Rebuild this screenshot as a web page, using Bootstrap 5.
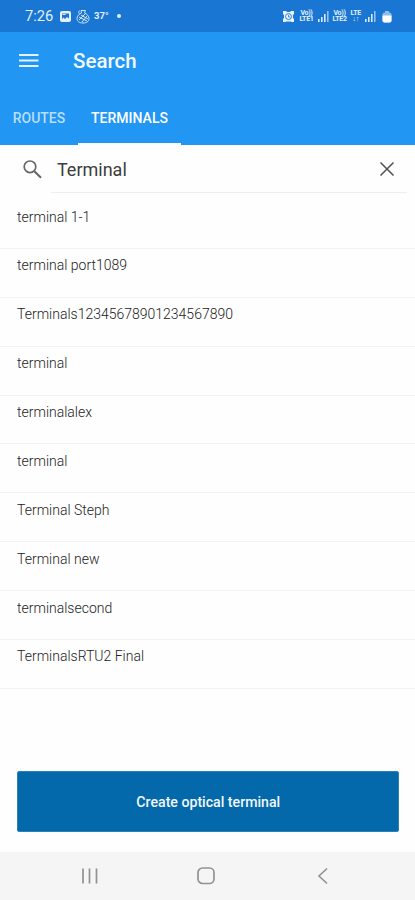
<!DOCTYPE html>
<html lang="en">
<head>
<meta charset="utf-8">
<meta name="viewport" content="width=device-width, initial-scale=1">
<title>Search</title>
<link href="https://cdn.jsdelivr.net/npm/bootstrap@5.3.0/dist/css/bootstrap.min.css" rel="stylesheet">
<style>
body{font-family:Roboto,"Liberation Sans",sans-serif;background:#fefefe;color:#414141;height:900px;overflow:hidden}
svg{display:block;flex:none}
.statusbar{height:32px;background:#1976d2;color:#e4effb;padding:0 23px 0 25px}
.clock{font-size:14.7px;line-height:32px;width:34px;white-space:nowrap}
.temp{font-size:9.5px;font-weight:700;line-height:32px;margin-left:4px;width:16px}
.dot{width:4px;height:4px;background:#e4effb;margin-left:7px}
.volte{font-size:7px;font-weight:700;line-height:6.5px;letter-spacing:-.3px;text-align:center;white-space:nowrap}
.battery{margin-left:6px}
.appbar{height:113px;background:#2196f3;color:#f4faff}
.titlerow{height:58px;padding-left:19px}
.pagetitle{font-size:20.5px;font-weight:500;line-height:24px;margin-left:34px}
.tabrow{height:55px;font-size:14px;font-weight:500}
.tabrow .nav-link{padding:0;color:#b9defb;width:78px;text-align:center;border-bottom:2px solid transparent;line-height:56px;height:55px}
.tabrow .nav-link.active{color:#fff;width:103px;border-color:#fff}
.searchrow{height:55px;padding:0 8px 0 22px}
.searchicon{height:48px}
.field{height:48px;margin-left:8px;border-bottom:1px solid #eeeeee;padding:1px 12px 0 6px}
.field input{border:0;padding:1px 0 0;font-size:18px;line-height:24px;color:#3c3c3c;background:none;outline:0;min-width:0}
.results{--bs-list-group-bg:transparent}
.results .list-group-item{height:48.89px;padding:5.6px 17px 0;border-color:#f3f3f3;font-size:14px;font-weight:300;line-height:22px;color:#222}
.results .list-group-item:last-child{border-bottom-width:1px}
.create{height:61px;margin:0 16px 20px 16.500px;padding:3px 0 0 1px;background:#0369ab;border:1px solid #2d7fb8;border-radius:2px;color:#f2f8fc;font-size:14.15px;font-weight:500}
.create:hover{background:#035c97;color:#fff}
.sysnav{height:48px;padding-right:3px;background:#f5f5f5}
.homekey{margin:0 97.500px}
</style>
</head>
<body class="d-flex flex-column">
<header>
  <div class="statusbar d-flex align-items-center">
    <span class="clock">7:26</span>
    <svg width="13" height="13" viewBox="0 0 13 13"><rect x="1" y="1" width="11" height="11" rx="2" fill="#e4effb"/><path d="M3 3.500h7v5L8 7 6 9 4.500 7.500 3 9z" fill="#1976d2"/><path d="M3.500 4.500h3" stroke="#e4effb"/></svg>
    <svg class="ms-1" width="14" height="15" viewBox="0 0 14 15" fill="none" stroke="#d3e5f8"><path d="M5 1.500h4.500l-1 2.500C11 5 13 7 13 9.500c0 3-2.500 4.500-6 4.500S1 12.500 1 9.500C1 7 3 5 5.500 4z"/><path d="M4 2c-2 0-2 2 0 3M3 8l8 4M5 6l7 4M3 11l6-6M6 13l5-6"/></svg>
    <span class="temp">37°</span>
    <span class="dot rounded-circle"></span>
    <div class="d-flex align-items-center ms-auto">
      <svg width="13" height="13" viewBox="0 0 13 13"><path d="M1 1h3l1 1h3l1-1h3v3l-1 1v3l1 1v3H9.500l-1-.5h-4l-1 .5H1V9l1-1V5L1 4z" fill="#e9f3fd"/><circle cx="6.500" cy="6.600" r="3" fill="none" stroke="#1976d2" stroke-width=".9"/><path d="M6.500 4.800V7h1.800" fill="none" stroke="#1976d2" stroke-width=".8"/></svg>
      <span class="volte ms-1">Vo))<br>LTE1</span>
      <svg class="ms-1" width="11" height="12" viewBox="0 0 11 12" fill="#d9e9fa"><path d="M0 9h1.600v3H0zM3 7h1.600v5H3zM6 4h1.600v8H6z"/><path d="M9 1h1.600v11H9z" opacity=".65"/></svg>
      <span class="volte ms-1">Vo))<br>LTE2</span>
      <span class="volte ms-1">LTE<br>↓↑</span>
      <svg class="ms-1" width="11" height="12" viewBox="0 0 11 12" fill="#d9e9fa"><path d="M0 9h1.600v3H0zM3 7h1.600v5H3zM6 4h1.600v8H6z"/><path d="M9 1h1.600v11H9z" opacity=".65"/></svg>
      <svg class="battery" width="10" height="13" viewBox="0 0 10 13"><rect x="3" y="1" width="4" height="3" fill="#8dbbea"/><rect x=".5" y="2.500" width="9" height="10" rx="2" fill="#8dbbea"/><path d="M.5 5.500h9v5a2 2 0 0 1-2 2h-5a2 2 0 0 1-2-2z" fill="#fff"/></svg>
    </div>
  </div>
  <div class="appbar">
    <div class="titlerow d-flex align-items-center">
      <svg width="20" height="16" viewBox="0 0 20 16"><path d="M0 2h19.500M0 7.500h19.500M0 13h19.500" stroke="#e3f2fe" stroke-width="2.200"/></svg>
      <h1 class="pagetitle mb-0">Search</h1>
    </div>
    <nav class="tabrow nav flex-nowrap">
      <a class="nav-link" href="#">ROUTES</a>
      <a class="nav-link active" href="#">TERMINALS</a>
    </nav>
  </div>
</header>
<main class="flex-grow-1 d-flex flex-column">
  <div class="searchrow d-flex align-items-start">
    <div class="searchicon d-flex align-items-center"><svg width="21" height="21" viewBox="0 0 21 21" fill="none" stroke="#666"><circle cx="8" cy="7.800" r="5.800" stroke-width="1.700"/><path d="m12.300 12.300 6.700 6.400" stroke-width="2.100"/></svg></div>
    <div class="field d-flex align-items-center flex-grow-1">
      <input class="flex-grow-1" type="text" value="Terminal" aria-label="Search">
      <svg width="16" height="16" viewBox="0 0 16 16"><path d="m1.500 1.500 13 13M14.500 1.500l-13 13" stroke="#505050" stroke-width="1.500"/></svg>
    </div>
  </div>
  <ul class="results list-group list-group-flush">
    <li class="list-group-item">terminal 1-1</li>
    <li class="list-group-item">terminal port1089</li>
    <li class="list-group-item">Terminals12345678901234567890</li>
    <li class="list-group-item">terminal</li>
    <li class="list-group-item">terminalalex</li>
    <li class="list-group-item">terminal</li>
    <li class="list-group-item">Terminal Steph</li>
    <li class="list-group-item">Terminal new</li>
    <li class="list-group-item">terminalsecond</li>
    <li class="list-group-item">TerminalsRTU2 Final</li>
  </ul>
  <button class="create btn mt-auto" type="button">Create optical terminal</button>
</main>
<footer class="sysnav d-flex justify-content-center align-items-center">
  <svg width="18" height="18" viewBox="0 0 18 18"><path d="M2 1.500v15M8.500 1.500v15M15.500 1.500v15" stroke="#929292" stroke-width="1.700"/></svg>
  <svg class="homekey" width="20" height="18" viewBox="0 0 20 18"><rect x="2" y="1" width="16" height="15.500" rx="4.500" fill="none" stroke="#929292" stroke-width="1.700"/></svg>
  <svg width="18" height="18" viewBox="0 0 18 18"><path d="M13 1.500 5 9l8 7.500" fill="none" stroke="#929292" stroke-width="1.600"/></svg>
</footer>
<script src="https://cdn.jsdelivr.net/npm/bootstrap@5.3.0/dist/js/bootstrap.bundle.min.js"></script>
</body>
</html>
